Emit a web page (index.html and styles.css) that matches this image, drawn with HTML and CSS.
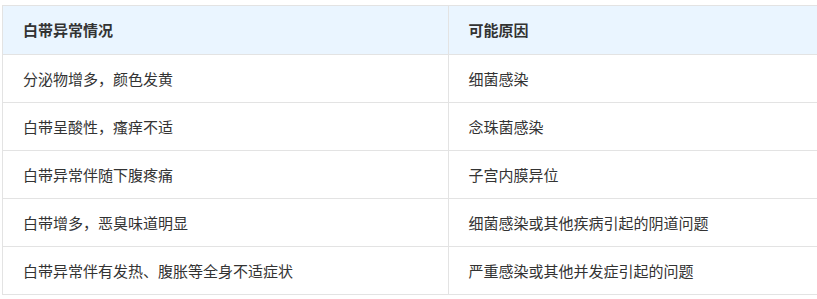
FILE: index.html
```html
<!DOCTYPE html>
<html lang="zh">
<head>
<meta charset="utf-8">
<link rel="stylesheet" href="styles.css">
</head>
<body>
<div class="wrap">
<table class="tbl">
<thead>
<tr><th>白带异常情况</th><th>可能原因</th></tr>
</thead>
<tbody>
<tr><td>分泌物增多，颜色发黄</td><td>细菌感染</td></tr>
<tr><td>白带呈酸性，瘙痒不适</td><td>念珠菌感染</td></tr>
<tr><td>白带异常伴随下腹疼痛</td><td>子宫内膜异位</td></tr>
<tr><td>白带增多，恶臭味道明显</td><td>细菌感染或其他疾病引起的阴道问题</td></tr>
<tr><td>白带异常伴有发热、腹胀等全身不适症状</td><td>严重感染或其他并发症引起的问题</td></tr>
</tbody>
</table>
</div>
</body>
</html>
```
FILE: styles.css
```css
html, body {
  margin: 0;
  padding: 0;
  overflow: hidden;
  background: #fff;
}
.wrap {
  width: 817px;
  overflow: hidden;
  padding: 5px 0 0 2px;
}
.tbl {
  border-collapse: collapse;
  width: 892px;
  table-layout: fixed;
  font-family: "Noto Sans CJK SC", "Microsoft YaHei", sans-serif;
  font-size: 15px;
  color: #333;
}
.tbl th, .tbl td {
  border: 1px solid #e3e3e3;
  padding: 0 20px;
  height: 47px;
  text-align: left;
  vertical-align: middle;
  line-height: 20px;
}
.tbl th {
  background: #eaf5ff;
  font-weight: bold;
  height: 48px;
}
```
